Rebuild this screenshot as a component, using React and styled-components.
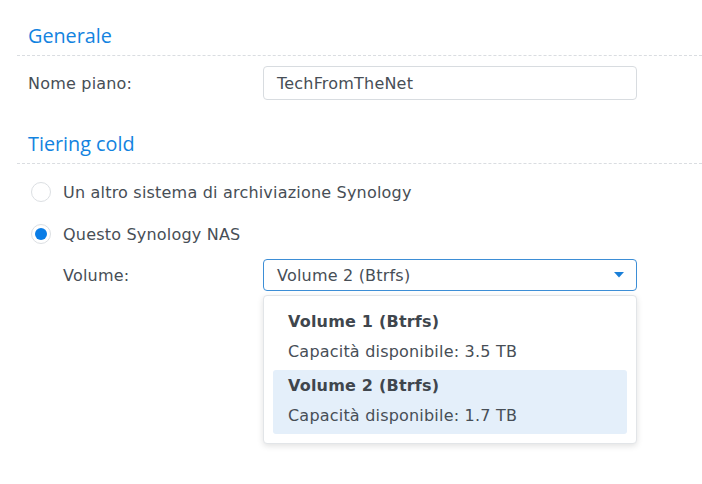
import React from "react";
import styled, { createGlobalStyle } from "styled-components";

const volumes = [
  { name: "Volume 1 (Btrfs)", free: "3.5 TB" },
  { name: "Volume 2 (Btrfs)", free: "1.7 TB", active: true },
];

const App = () => {
  return (
    <Page>
      <GlobalStyle />
      <SectionTitle>Generale</SectionTitle>
      <FieldRow>
        <Label>Nome piano:</Label>
        <TextBox>TechFromTheNet</TextBox>
      </FieldRow>

      <SectionTitle $spaced>Tiering cold</SectionTitle>
      <RadioRow>
        <Radio />
        <span>Un altro sistema di archiviazione Synology</span>
      </RadioRow>
      <RadioRow>
        <Radio $checked />
        <span>Questo Synology NAS</span>
      </RadioRow>
      <FieldRow $indent>
        <Label $indent>Volume:</Label>
        <SelectWrap>
          <Select>
            Volume 2 (Btrfs)
            <svg width="10" height="6" viewBox="0 0 10 6">
              <path d="M0 0 H10 L5 5.5 Z" fill="#1a7fd8" />
            </svg>
          </Select>
          <Menu>
            {volumes.map((v) => (
              <MenuItem key={v.name} $active={v.active}>
                <ItemName>{v.name}</ItemName>
                <ItemSub>Capacità disponibile: {v.free}</ItemSub>
              </MenuItem>
            ))}
          </Menu>
        </SelectWrap>
      </FieldRow>
    </Page>
  );
};

export default App;

const GlobalStyle = createGlobalStyle`
  body {
    margin: 0;
    background: #fff;
    font-family: "DejaVu Sans", Verdana, sans-serif;
  }
`;

const Page = styled.div`
  width: 702px;
  height: 484px;
  padding: 16px 0 0 17px;
  box-sizing: border-box;
  color: #474e56;
  font-size: 16px;
  letter-spacing: 0.2px;
`;

const SectionTitle = styled.div`
  margin-top: ${(p) => (p.$spaced ? "24px" : "0")};
  padding: 7px 0 6px 11px;
  line-height: 26px;
  font-family: "Open Sans", "Noto Sans", sans-serif;
  font-size: 19.8px;
  letter-spacing: 0;
  color: #1383e0;
  border-bottom: 1px dashed #dadde1;
`;

const FieldRow = styled.div`
  display: flex;
  align-items: center;
  margin-top: 10px;
  padding-left: ${(p) => (p.$indent ? "46px" : "11px")};
`;

const Label = styled.div`
  width: ${(p) => (p.$indent ? "200px" : "235px")};
  flex-shrink: 0;
`;

const TextBox = styled.div`
  width: 374px;
  height: 34px;
  box-sizing: border-box;
  border: 1px solid #d8dce0;
  border-radius: 4px;
  padding: 0 13px;
  display: flex;
  align-items: center;
`;

const RadioRow = styled.div`
  display: flex;
  align-items: center;
  gap: 12px;
  height: 30px;
  margin-top: 13px;
  padding-left: 14px;
  & + & {
    margin-top: 12px;
  }
`;

const Radio = styled.span`
  width: 20px;
  height: 20px;
  box-sizing: border-box;
  border-radius: 50%;
  border: 1px solid #dcdfe3;
  display: flex;
  align-items: center;
  justify-content: center;
  &::after {
    content: "";
    display: ${(p) => (p.$checked ? "block" : "none")};
    width: 12px;
    height: 12px;
    border-radius: 50%;
    background: #0a7de6;
  }
`;

const SelectWrap = styled.div`
  position: relative;
`;

const Select = styled.div`
  width: 374px;
  height: 32px;
  box-sizing: border-box;
  border: 1px solid #3d8ed6;
  border-radius: 4px;
  padding: 0 12px 0 13px;
  display: flex;
  align-items: center;
  justify-content: space-between;
`;

const Menu = styled.div`
  position: absolute;
  top: 36px;
  left: 0;
  width: 374px;
  box-sizing: border-box;
  padding: 10px 9px 9px;
  background: #fff;
  border: 1px solid #e2e5e8;
  border-radius: 4px;
  box-shadow: 0 2px 6px rgba(0, 0, 0, 0.12);
`;

const MenuItem = styled.div`
  padding: 5px 15px 7px;
  border-radius: 3px;
  background: ${(p) => (p.$active ? "#e4effa" : "transparent")};
`;

const ItemName = styled.div`
  line-height: 22px;
  font-weight: bold;
  color: #3f464d;
`;

const ItemSub = styled.div`
  line-height: 22px;
  margin-top: 8px;
`;
